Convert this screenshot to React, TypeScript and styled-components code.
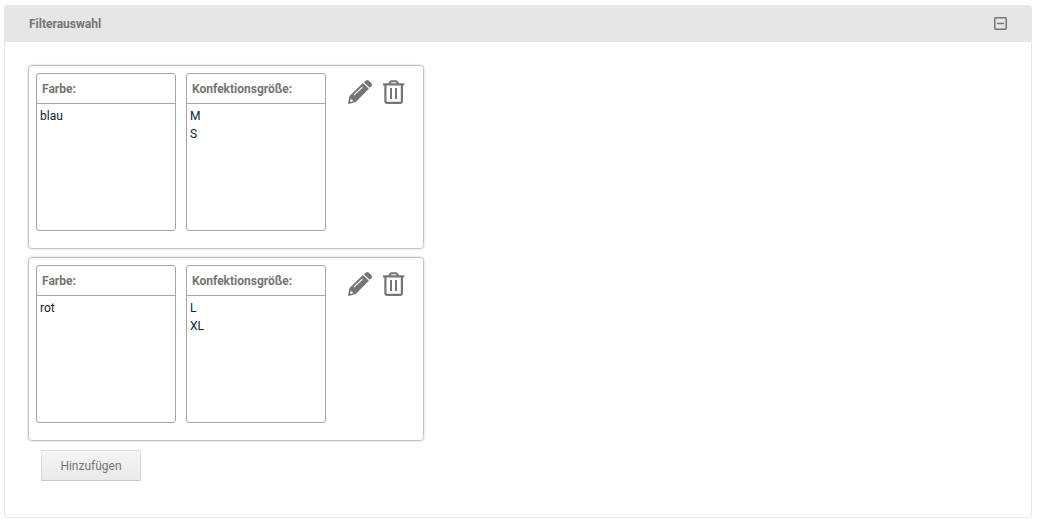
import React, { useState } from "react";
import styled, { createGlobalStyle } from "styled-components";

const GlobalStyle = createGlobalStyle`
  *, *::before, *::after { box-sizing: border-box; }
  body {
    margin: 0;
    background: #fff;
    color: #142030;
    font: 12px/18px Roboto, "Liberation Sans", sans-serif;
  }
`;

const Panel = styled.section`
  margin: 5px 6px 0 4px;
  border: 1px solid #e6e6e6;
  border-radius: 3px;
`;

const PanelHeader = styled.header`
  display: flex;
  align-items: center;
  justify-content: space-between;
  height: 36px;
  padding: 0 24px;
  background: #e6e6e6;
`;

const PanelTitle = styled.h2`
  margin: 0;
  font-size: 12px;
  font-weight: 700;
  color: #757575;
`;

const IconButton = styled.button`
  display: flex;
  padding: 0;
  border: 0;
  background: none;
  color: #757575;
  cursor: pointer;
`;

const CollapseButton = styled(IconButton)`
  padding-bottom: 2px;
`;

const PanelBody = styled.div`
  display: flex;
  flex-direction: column;
  align-items: flex-start;
  gap: 8px;
  padding: 23px 23px 36px;
`;

const FilterCard = styled.article`
  display: flex;
  align-items: flex-start;
  width: 396px;
  max-width: 100%;
  padding: 7px 7px 17px;
  border: 1px solid #c4c4c4;
  border-radius: 4px;
  box-shadow: 0 0 2px #bbb;
`;

const Groups = styled.div`
  display: flex;
  gap: 10px;
`;

const Group = styled.section`
  width: 140px;
  min-height: 158px;
  border: 1px solid #a6a6a6;
  border-radius: 3px;
`;

const GroupTitle = styled.h3`
  margin: 0;
  padding: 6px 5px 5px;
  border-bottom: 1px solid #a6a6a6;
  font-size: 12px;
  font-weight: 700;
  color: #757575;
`;

const Values = styled.ul`
  margin: 0;
  padding: 3px;
  list-style: none;
`;

const Actions = styled.div`
  display: flex;
  gap: 11px;
  padding: 7px 0 0 22px;
`;

const AddButton = styled.button`
  width: 100px;
  height: 31px;
  margin: 1px 0 0 13px;
  padding: 0;
  border: 1px solid #dcdcdc;
  border-bottom-color: #c8c8c8;
  border-radius: 1px;
  background: linear-gradient(#f5f5f5, #eaeaea);
  color: #757575;
  font: inherit;
  cursor: pointer;
`;

const PencilIcon = () => (
  <svg width="24" height="24" viewBox="0 0 24 24" fill="currentColor" aria-hidden="true">
    <path d="M15.900 2.200 17.500.7c1-.9 2.300-.9 3.200-.1l2.600 2.500c.9.9.9 2.200 0 3.100L21.600 7.800Z" />
    <path
      fillRule="evenodd"
      d="m14.900 2.900 6 5.900L7.800 22.100.7 24 0 23.300l1.500-7.300Zm-1 3.800L5.400 14.700l.9.900 8.500-8ZM2.500 19.200l-.4 1.800.9.900 1.900-.5v-1.200H3.800v-1Z"
    />
  </svg>
);

const TrashIcon = () => (
  <svg width="22" height="24" viewBox="0 0 22 24" fill="none" stroke="currentColor" aria-hidden="true">
    <path strokeWidth="2.200" d="M0 4.400h21.300" />
    <path strokeWidth="2" d="M6 4l1.200-1.900Q7.800 1.200 9 1.200h3.300q1.200 0 1.800.9L15.300 4" />
    <path strokeWidth="2.200" d="M2.400 4v17q0 1.800 1.800 1.800h12.900q1.800 0 1.800-1.800V4" />
    <path strokeWidth="2" d="M8 8v11M13 8v11" />
  </svg>
);

const CollapseIcon = ({ open }: { open: boolean }) => (
  <svg width="13" height="13" viewBox="0 0 13 13" fill="none" stroke="currentColor" aria-hidden="true">
    <rect x=".8" y=".8" width="11.400" height="11.400" rx=".6" strokeWidth="1.500" />
    <path strokeWidth="1.400" d={open ? "M3 6.500h7" : "M3 6.500h7M6.500 3v7"} />
  </svg>
);

interface FilterGroup {
  name: string;
  values: string[];
}

const filters: FilterGroup[][] = [
  [
    { name: "Farbe:", values: ["blau"] },
    { name: "Konfektionsgröße:", values: ["M", "S"] },
  ],
  [
    { name: "Farbe:", values: ["rot"] },
    { name: "Konfektionsgröße:", values: ["L", "XL"] },
  ],
];

export default function App() {
  const [open, setOpen] = useState(true);
  return (
    <>
      <GlobalStyle />
      <Panel>
        <PanelHeader>
          <PanelTitle>Filterauswahl</PanelTitle>
          <CollapseButton
            type="button"
            aria-label={open ? "Einklappen" : "Ausklappen"}
            aria-expanded={open}
            onClick={() => setOpen(!open)}
          >
            <CollapseIcon open={open} />
          </CollapseButton>
        </PanelHeader>
        {open && (
          <PanelBody>
            {filters.map((groups, index) => (
              <FilterCard key={index}>
                <Groups>
                  {groups.map((group) => (
                    <Group key={group.name}>
                      <GroupTitle>{group.name}</GroupTitle>
                      <Values>
                        {group.values.map((value) => (
                          <li key={value}>{value}</li>
                        ))}
                      </Values>
                    </Group>
                  ))}
                </Groups>
                <Actions>
                  <IconButton type="button" aria-label="Bearbeiten">
                    <PencilIcon />
                  </IconButton>
                  <IconButton type="button" aria-label="Löschen">
                    <TrashIcon />
                  </IconButton>
                </Actions>
              </FilterCard>
            ))}
            <AddButton type="button">Hinzufügen</AddButton>
          </PanelBody>
        )}
      </Panel>
    </>
  );
}
